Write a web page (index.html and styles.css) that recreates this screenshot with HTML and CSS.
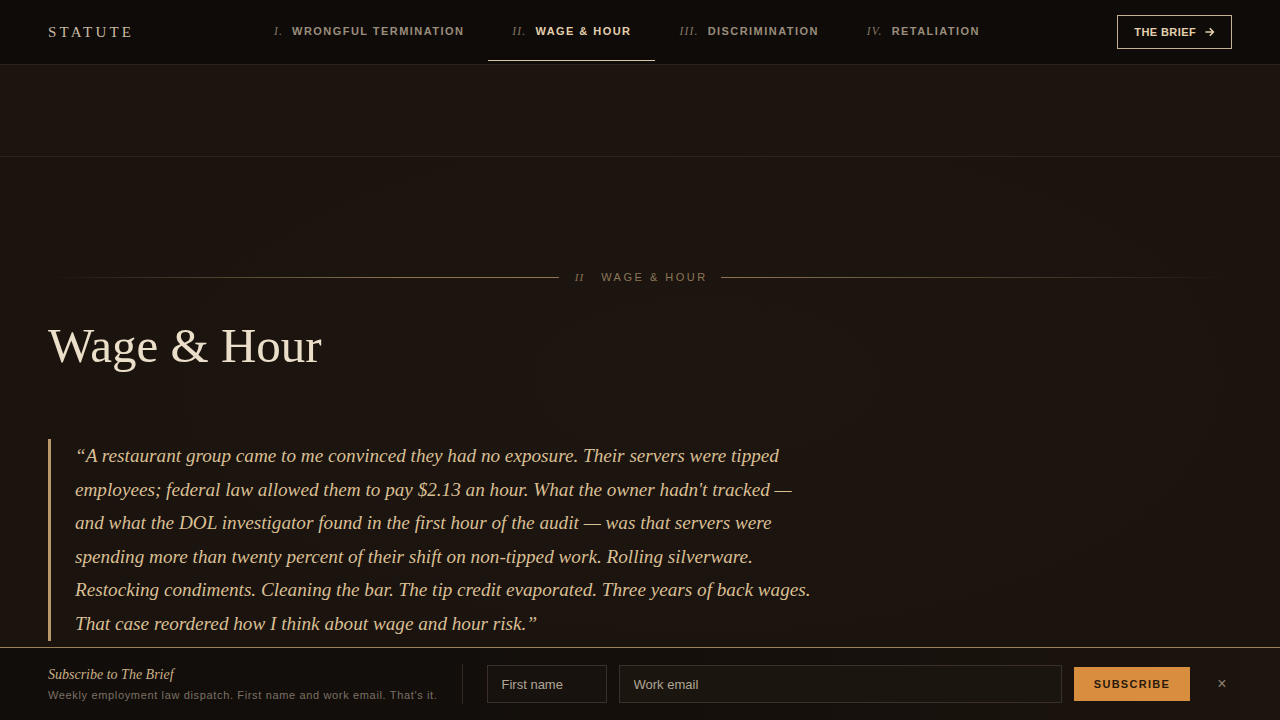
FILE: index.html
```html
<!DOCTYPE html>
<html lang="en">
<head>
<meta charset="utf-8">
<title>Statute — Wage &amp; Hour</title>
<link rel="stylesheet" href="styles.css">
</head>
<body>
<header class="topbar">
  <div class="brand">STATUTE</div>
  <nav class="nav">
    <a class="nav-link"><span class="num">I.</span><span class="lbl">Wrongful Termination</span></a>
    <a class="nav-link active"><span class="num">II.</span><span class="lbl">Wage &amp; Hour</span></a>
    <a class="nav-link"><span class="num">III.</span><span class="lbl">Discrimination</span></a>
    <a class="nav-link"><span class="num">IV.</span><span class="lbl">Retaliation</span></a>
  </nav>
  <a class="brief-btn">THE BRIEF
    <svg class="arrow" width="10" height="10" viewBox="0 0 10 10"><path d="M1 5h7.5M5.2 1.7L8.5 5 5.2 8.3" fill="none" stroke="currentColor" stroke-width="1.6" stroke-linecap="round" stroke-linejoin="round"/></svg>
  </a>
</header>
<div class="band"></div>
<main class="section">
  <div class="eyebrow">
    <span class="rule rule-left"></span>
    <span class="eb-num">II</span>
    <span class="eb-text">WAGE &amp; HOUR</span>
    <span class="rule rule-right"></span>
  </div>
  <h1 class="title">Wage &amp; Hour</h1>
  <blockquote class="quote">“A restaurant group came to me convinced they had no exposure. Their servers were tipped employees; federal law allowed them to pay $2.13 an hour. What the owner hadn't tracked — and what the DOL investigator found in the first hour of the audit — was that servers were spending more than twenty percent of their shift on non-tipped work. Rolling silverware. Restocking condiments. Cleaning the bar. The tip credit evaporated. Three years of back wages. That case reordered how I think about wage and hour risk.”</blockquote>
</main>
<aside class="subscribe">
  <div class="sub-copy">
    <div class="sub-title">Subscribe to The Brief</div>
    <div class="sub-desc">Weekly employment law dispatch. First name and work email. That's it.</div>
  </div>
  <div class="sub-divider"></div>
  <form class="sub-form">
    <input class="field field-name" type="text" placeholder="First name">
    <input class="field field-email" type="email" placeholder="Work email">
    <button class="sub-btn" type="button">SUBSCRIBE</button>
  </form>
  <button class="close" type="button">×</button>
</aside>
</body>
</html>
```
FILE: styles.css
```css
* { box-sizing: border-box; }
html, body { margin: 0; padding: 0; }
body {
  width: 1280px;
  height: 720px;
  overflow: hidden;
  background: #1b140f;
  font-family: "Liberation Sans", Arial, sans-serif;
  color: #e6dac4;
}

/* Top bar */
.topbar {
  height: 65px;
  display: flex;
  align-items: center;
  padding: 0 48px;
  background: #0e0b08;
  border-bottom: 1px solid #2a221b;
}
.brand {
  font-family: "Liberation Serif", "Times New Roman", serif;
  font-size: 15px;
  letter-spacing: 3.2px;
  color: #c9bba3;
  width: 202px;
}
.nav {
  display: flex;
  align-self: stretch;
}
.nav-link {
  position: relative;
  display: flex;
  align-items: center;
  gap: 9px;
  padding: 0 24px 2px;
  text-decoration: none;
}
.nav-link .num {
  font-family: "Liberation Serif", "Times New Roman", serif;
  font-style: italic;
  font-size: 11.5px;
  letter-spacing: 1.2px;
  color: #857664;
}
.nav-link .lbl {
  font-size: 11px;
  font-weight: 700;
  letter-spacing: 1.45px;
  text-transform: uppercase;
  color: #9a8d7c;
}
.nav-link.active .lbl { color: #e3cfac; }
.nav-link.active::after {
  content: "";
  position: absolute;
  left: 0;
  right: 0;
  bottom: 3px;
  height: 1.5px;
  background: #d8c6a6;
}
.brief-btn {
  margin-left: auto;
  display: flex;
  align-items: center;
  gap: 9px;
  height: 34px;
  padding: 0 16px;
  border: 1px solid #c4b094;
  font-size: 11px;
  font-weight: 700;
  letter-spacing: 0.4px;
  color: #e3cfac;
}
.arrow { display: block; }

.band {
  height: 92px;
  border-bottom: 1px solid #2a221b;
  background: #1b140f;
}

/* Section */
.section {
  padding: 112px 48px 0;
  background: radial-gradient(ellipse at 55% 40%, #1c1510 0%, #1a130e 70%);
  height: 563px;
}
.eyebrow {
  display: flex;
  align-items: center;
  gap: 16px;
  height: 16px;
}
.rule { flex: 1; height: 1px; }
.rule-left { background: linear-gradient(to right, rgba(140,118,80,0), #8c7650 70%); }
.rule-right { background: linear-gradient(to right, #8c7650, rgba(140,118,80,0.6) 40%, rgba(140,118,80,0)); }
.eb-num {
  font-family: "Liberation Serif", "Times New Roman", serif;
  font-style: italic;
  font-size: 11px;
  letter-spacing: 1px;
  color: #8a7454;
  margin-right: 1px;
}
.eb-text {
  font-size: 11px;
  letter-spacing: 2.5px;
  color: #8d7858;
  margin-right: -2.5px;
}
.title {
  margin: 34px 0 0;
  font-family: "Liberation Serif", "Times New Roman", serif;
  font-weight: 400;
  font-size: 49px;
  line-height: 53px;
  letter-spacing: 0;
  color: #ebdfc9;
}
.quote {
  margin: 67px 0 0;
  max-width: 772px;
  padding: 0 0 0 24px;
  border-left: 3px solid #b8996a;
  font-family: "Liberation Serif", "Times New Roman", serif;
  font-style: italic;
  font-size: 19.2px;
  line-height: 33.6px;
  color: #d9bf93;
}

/* Subscribe bar */
.subscribe {
  position: fixed;
  left: 0;
  right: 0;
  bottom: 0;
  height: 73px;
  display: flex;
  align-items: center;
  padding: 0 48px;
  border-top: 1px solid #9c8158;
  background: linear-gradient(to right, #110d0a 0%, #140f0b 50%, #1c140e 100%);
}
.sub-copy { display: flex; flex-direction: column; gap: 6px; }
.sub-title {
  font-family: "Liberation Serif", "Times New Roman", serif;
  font-style: italic;
  font-size: 14px;
  color: #cbb088;
  margin-top: -1px;
}
.sub-desc {
  font-size: 11px;
  letter-spacing: 0.65px;
  color: #7b7064;
}
.sub-divider {
  width: 1px;
  height: 40px;
  background: #30271f;
  margin: 0 24px;
}
.sub-form {
  flex: 1;
  display: flex;
  align-items: center;
  gap: 12px;
  margin: 0;
}
.field {
  height: 38px;
  padding: 0 14px;
  border: 1px solid #3a3027;
  background: #18120e;
  font-family: "Liberation Sans", Arial, sans-serif;
  font-size: 13px;
  color: #b3a898;
  outline: none;
}
.field::placeholder { color: #b0a595; }
.field-name { width: 120px; }
.field-email { flex: 1; background: #1b1510; }
.sub-btn {
  width: 116px;
  height: 34px;
  border: 0;
  background: #d98e3f;
  font-family: "Liberation Sans", Arial, sans-serif;
  font-size: 11px;
  font-weight: 700;
  letter-spacing: 1.3px;
  color: #2b1a0c;
}
.close {
  margin-left: 22px;
  width: 20px;
  padding: 0;
  border: 0;
  background: none;
  font-family: "Liberation Sans", Arial, sans-serif;
  font-size: 16px;
  color: #8c8072;
}
```
